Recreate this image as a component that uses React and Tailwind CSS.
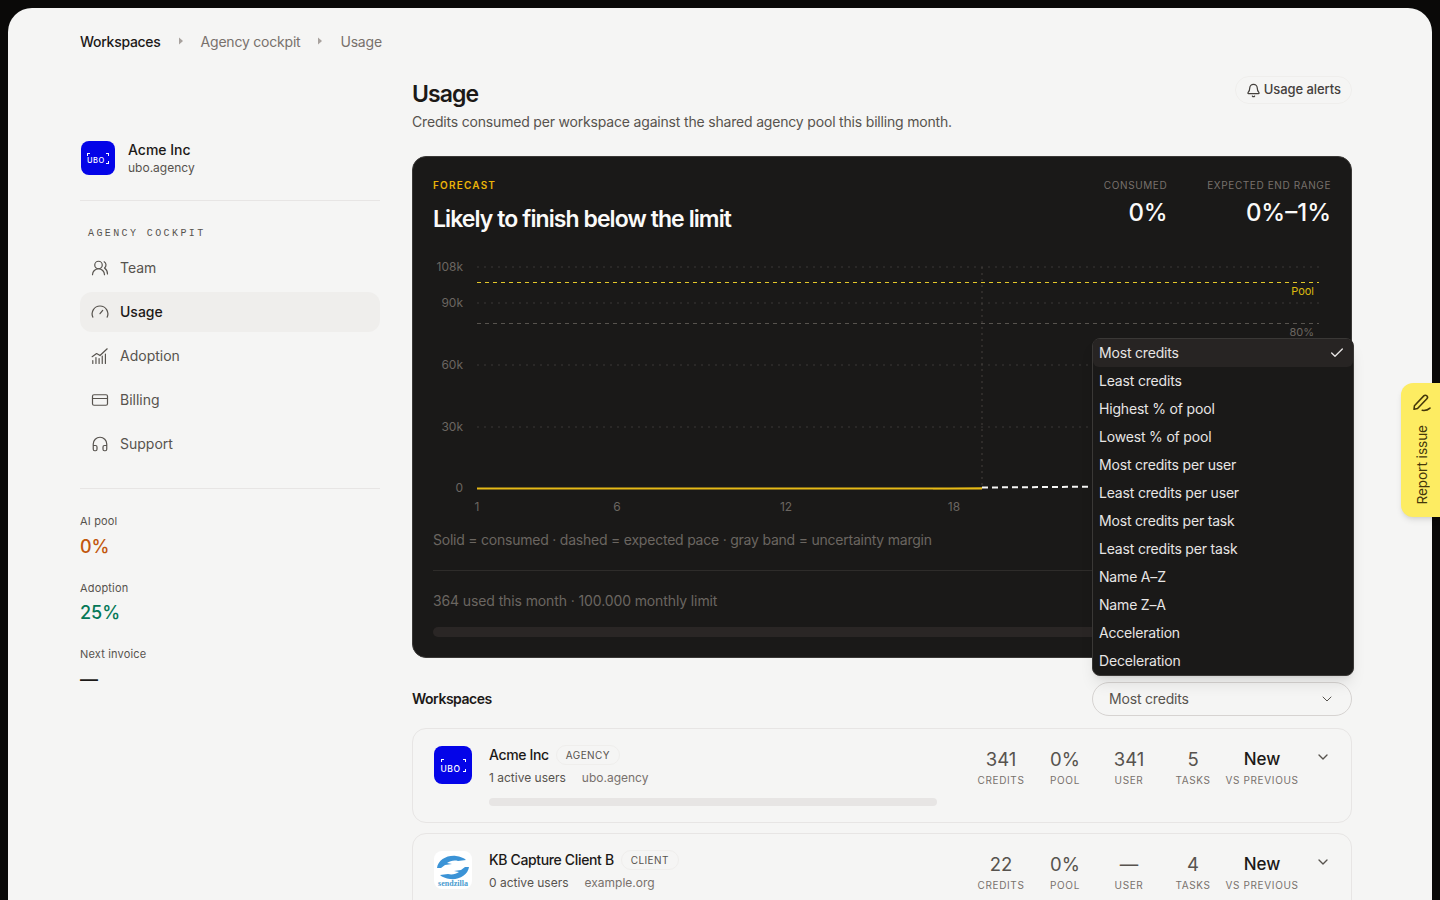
import React from "react";
import { Bell, Check, ChevronDown, CreditCard, Headphones, UsersRound } from "lucide-react";

const sortOptions = [
  "Most credits",
  "Least credits",
  "Highest % of pool",
  "Lowest % of pool",
  "Most credits per user",
  "Least credits per user",
  "Most credits per task",
  "Least credits per task",
  "Name A–Z",
  "Name Z–A",
  "Acceleration",
  "Deceleration",
];

const GaugeIcon = () => (
  <svg width="18" height="18" viewBox="0 0 16 16" fill="none" stroke="currentColor" strokeWidth="1.1" strokeLinecap="round" className="shrink-0 text-[#57534e]">
    <path d="M1.6 12.5A7 7 0 1 1 14.4 12.5" />
    <path d="M8 9.5 10.4 6.6" />
  </svg>
);

const AdoptionIcon = () => (
  <svg width="18" height="18" viewBox="0 0 16 16" fill="none" stroke="currentColor" strokeWidth="1.05" strokeLinecap="round" strokeLinejoin="round" className="shrink-0">
    <path d="M1 8.6 5 5.8 8 7.6 14.4 1.6" />
    <path d="M1.6 14.6v-2.6M4.4 14.6V9.4M7.2 14.6v-4.4M10 14.6V8M12.8 14.6V6.2" />
  </svg>
);

const UboLogo = ({ size, box, text, className = "" }) => (
  <div className={`${className} flex shrink-0 items-center justify-center rounded-[8px] bg-[#0404e8]`} style={{ width: size, height: size }}>
    <div className={`${box} relative flex items-end`}>
      <span className="absolute left-0 top-0 h-[3px] w-[3px] border-l border-t border-white" />
      <span className="absolute right-0 top-0 h-[3px] w-[3px] border-r border-t border-white" />
      <span className="absolute bottom-0 right-0 h-[3px] w-[3px] border-b border-r border-white" />
      <span className={`${text} font-medium leading-[6px] tracking-[0.06em] text-white`}>UBO</span>
    </div>
  </div>
);

const SendzillaLogo = () => (
  <div className="flex h-[38px] w-[38px] shrink-0 flex-col items-center rounded-[8px] bg-white pt-[3px]">
    <svg width="34" height="27" viewBox="0 0 34 27">
      <path d="M1 14C2 6 11 1 20 2c4 .5 8 2 10 4l-8 1c-4-1-8 0-11 2l5 1-7 1-4 3z" fill="#3b93d6" />
      <path d="M33 13C32 21 23 26 14 25c-4-.5-8-2-10-4l8-1c4 1 8 0 11-2l-5-1 7-1 4-3z" fill="#3b93d6" />
    </svg>
    <span className="mt-[-1px] font-['Liberation_Serif',serif] text-[8px] font-bold leading-[7px] text-[#4a9ccf]">sendzilla</span>
  </div>
);

const NavItem = ({ icon, label, active }) => (
  <div className={`flex h-10 items-center gap-3 rounded-[12px] px-3 text-[14px] leading-[20px] ${active ? "bg-[#efeeec] font-medium text-[#1c1917]" : "text-[#57534e]"}`}>
    <span className="flex w-4 justify-center">{icon}</span>
    {label}
  </div>
);

const SideStat = ({ label, value, color, className, gap = "mt-[5px]" }) => (
  <div className={className}>
    <div className="text-[11px] leading-[14px] tracking-[0.015em] text-[#57534e]">{label}</div>
    <div className={`${gap} text-[18px] font-medium leading-[28px] ${color}`}>{value}</div>
  </div>
);

const Crumb = () => (
  <svg width="6" height="8" viewBox="0 0 6 8" className="mx-[17px]">
    <path d="M1 0.5 5 4 1 7.5Z" fill="#a8a29e" />
  </svg>
);

const Chart = () => (
  <svg width="898" height="263" viewBox="0 0 898 263" className="block font-['Inter',sans-serif]">
    {[12, 48, 110, 172].map((y) => (
      <line key={y} x1="44" x2="886" y1={y} y2={y} stroke="#3a3836" strokeDasharray="2 5" />
    ))}
    <line x1="44" x2="886" y1="27.5" y2="27.5" stroke="#e3c72a" strokeDasharray="4 4" />
    <line x1="44" x2="886" y1="68.5" y2="68.5" stroke="#57534e" strokeDasharray="4 4" />
    <line x1="549" x2="549" y1="12" y2="233" stroke="#44403c" strokeDasharray="2 4" />
    <path d="M500 233.5 549 232 549 234 500 234.5Z" fill="#78650f" />
    <line x1="44" x2="549" y1="233.5" y2="233.5" stroke="#e6b917" strokeWidth="2" />
    <line x1="549" x2="886" y1="232.5" y2="230" stroke="#f5f5f4" strokeWidth="2" strokeDasharray="6 4" />
    <g fill="#6b6661" fontSize="12" textAnchor="end">
      <text x="30" y="16">108k</text>
      <text x="30" y="52">90k</text>
      <text x="30" y="114">60k</text>
      <text x="30" y="176">30k</text>
      <text x="30" y="237">0</text>
    </g>
    <g fill="#6b6661" fontSize="12" textAnchor="middle">
      <text x="44" y="256">1</text>
      <text x="184" y="256">6</text>
      <text x="353" y="256">12</text>
      <text x="521" y="256">18</text>
    </g>
    <text x="881" y="40" fill="#dcb90f" fontSize="11" textAnchor="end">Pool</text>
    <text x="881" y="81" fill="#6b6661" fontSize="11" textAnchor="end">80%</text>
  </svg>
);

const Metric = ({ value, label, strong, className = "w-16" }) => (
  <div className={`${className} -mt-px flex flex-col items-center`}>
    <div className={strong ? "text-[17px] font-medium leading-[28px] text-[#1c1917]" : "text-[18.5px] leading-[28px] text-[#57534e]"}>{value}</div>
    <div className="whitespace-nowrap text-[10px] leading-[14px] tracking-[0.065em] text-[#78716c]">{label}</div>
  </div>
);

const WorkspaceCard = ({ logo, name, tag, users, domain, credits, user, tasks, bar }) => (
  <div className="flex h-[95px] shrink-0 items-start rounded-[14px] border border-[#e7e5e4] pl-[21px] pr-[20px] pt-[17px]">
    {logo}
    <div className="ml-[17px] mt-[-2px] w-[448px] shrink-0">
      <div className="flex h-5 items-center">
        <span className="text-[14px] font-medium tracking-[-0.025em] text-[#1c1917]">{name}</span>
        <span className="ml-[7px] mt-[2px] rounded-full border border-[#efeeec] px-[9px] py-[2px] text-[10px] leading-[14px] tracking-[0.04em] text-[#57534e]">{tag}</span>
      </div>
      <div className="mt-[4px] flex text-[12px] leading-[20px]">
        <span className="text-[#57534e]">{users}</span>
        <span className="ml-4 text-[#78716c]">{domain}</span>
      </div>
      {bar && <div className="mt-[10px] h-2 rounded-full bg-[#e7e5e4]" />}
    </div>
    <div className="ml-[32px] flex shrink-0">
      <Metric value={credits} label="CREDITS" />
      <Metric value="0%" label="POOL" />
      <Metric value={user} label="USER" />
      <Metric value={tasks} label="TASKS" />
      <Metric value="New" label="VS PREVIOUS" strong className="w-[74px]" />
    </div>
    <ChevronDown size={16} className="ml-4 mt-[3px] shrink-0 text-[#57534e]" />
  </div>
);

export default function App() {
  return (
    <div className="relative h-[900px] overflow-hidden bg-[#0a0908] px-2 pt-2 font-['Inter',sans-serif]">
      <div className="h-[892px] overflow-hidden rounded-t-[24px] bg-[#f5f5f4] px-[72px] pt-[23px]">
        <div className="flex h-5 items-center text-[14px] tracking-[-0.015em] text-[#78716c]">
          <span className="font-medium tracking-[-0.02em] text-[#1c1917]">Workspaces</span>
          <Crumb />
          <span>Agency cockpit</span>
          <Crumb />
          <span>Usage</span>
        </div>

        <div className="flex gap-8">
          {/* sidebar */}
          <aside className="w-[300px] shrink-0 pt-[89px]">
            <div className="flex items-start gap-[13px] pb-[23px] pl-px">
              <UboLogo size={34} box="h-[11px] w-[22px]" text="text-[7.5px]" className="mt-px" />
              <div className="mt-px">
                <div className="text-[14px] font-medium leading-[18px] text-[#1c1917]">Acme Inc</div>
                <div className="text-[12px] leading-[18px] text-[#57534e]">ubo.agency</div>
              </div>
            </div>
            <div className="border-t border-[#e7e5e4] pb-[26px]" />
            <div className="pl-2 font-['Liberation_Mono',monospace] text-[10px] leading-[14px] tracking-[0.24em] text-[#57534e]">AGENCY COCKPIT</div>
            <nav className="mt-[7px] flex flex-col gap-1">
              <NavItem label="Team" icon={<UsersRound size={18} strokeWidth={1.6} className="shrink-0" />} />
              <NavItem label="Usage" active icon={<GaugeIcon />} />
              <NavItem label="Adoption" icon={<AdoptionIcon />} />
              <NavItem label="Billing" icon={<CreditCard size={18} strokeWidth={1.6} className="shrink-0" />} />
              <NavItem label="Support" icon={<Headphones size={18} strokeWidth={1.6} className="shrink-0" />} />
            </nav>
            <div className="mt-[24px] border-t border-[#e7e5e4]" />
            <SideStat className="mt-[25px]" label="AI pool" value="0%" color="text-[#c2570c]" />
            <SideStat className="mt-[20px]" label="Adoption" value="25%" color="text-[#047857]" gap="mt-[4px]" />
            <SideStat className="mt-[20px]" label="Next invoice" value="—" color="text-[#1c1917]" />
          </aside>

          {/* main column */}
          <main className="flex w-[940px] shrink-0 flex-col pt-[27px]">
            <div className="flex items-start justify-between">
              <div>
                <h1 className="text-[23px] font-semibold leading-[32px] tracking-[-0.04em] text-[#1c1917]">Usage</h1>
                <p className="mt-[2px] text-[14px] leading-[20px] tracking-[-0.013em] text-[#57534e]">Credits consumed per workspace against the shared agency pool this billing month.</p>
              </div>
              <button className="-mt-[2px] flex h-7 items-center gap-[3px] rounded-full border border-[#efeeec] pl-[10px] pr-[10px] text-[13px] font-medium tracking-[-0.005em] text-[#44403c]">
                <Bell size={15} strokeWidth={2} />
                Usage alerts
              </button>
            </div>

            <section className="mt-[24px] h-[502px] rounded-[14px] border border-[#3a3836] bg-[#1a1918] px-5 pt-5">
              <div className="flex items-start justify-between">
                <div>
                  <div className="text-[10px] font-semibold leading-[16px] tracking-[0.12em] text-[#eab308]">FORECAST</div>
                  <h2 className="mt-[10px] text-[23px] font-semibold leading-[32px] tracking-[-0.04em] text-[#fafaf9]">Likely to finish below the limit</h2>
                </div>
                <div className="flex gap-10 text-right">
                  <div>
                    <div className="text-[10px] leading-[16px] tracking-[0.06em] text-[#78716c]">CONSUMED</div>
                    <div className="mt-[4px] text-[24px] font-medium leading-[32px] tracking-[-0.01em] text-[#fafaf9]">0%</div>
                  </div>
                  <div>
                    <div className="text-[10px] leading-[16px] tracking-[0.06em] text-[#78716c]">EXPECTED END RANGE</div>
                    <div className="mt-[4px] text-[24px] font-medium leading-[32px] text-[#fafaf9]">0%–1%</div>
                  </div>
                </div>
              </div>
              <div className="mt-[20px]">
                <Chart />
              </div>
              <p className="mt-[12px] text-[14px] leading-[20px] tracking-[-0.016em] text-[#6b6661]">Solid = consumed · dashed = expected pace · gray band = uncertainty margin</p>
              <div className="mt-5 border-t border-[#2e2c2a]" />
              <p className="mt-5 text-[14px] leading-[20px] tracking-[-0.008em] text-[#6b6661]">364 used this month · 100.000 monthly limit</p>
              <div className="mt-4 h-[10px] rounded-full bg-[#2a2625]" />
            </section>

            <div className="mt-6 flex items-center justify-between">
              <h3 className="mb-[2px] text-[14px] font-semibold tracking-[-0.035em] text-[#1c1917]">Workspaces</h3>
              <div className="relative w-[260px]">
                <div className="absolute bottom-[calc(100%+6px)] left-0 z-10 w-[262px] rounded-[8px] border border-[#3a3836] bg-[#1a1918] shadow-lg">
                  {sortOptions.map((option, i) => (
                    <div key={option} className={`flex h-7 items-center justify-between rounded-[6px] px-[6px] text-[14px] leading-[20px] tracking-[-0.013em] text-[#e7e5e4] ${i === 0 ? "bg-[#272423]" : ""}`}>
                      {option}
                      {i === 0 && <Check size={16} strokeWidth={2} className="mr-[2px]" />}
                    </div>
                  ))}
                </div>
                <div className="flex h-[34px] items-center justify-between rounded-full border border-[#d6d3d1] pl-4 pr-[16px] text-[14px] leading-[20px] tracking-[-0.013em] text-[#57534e]">
                  Most credits
                  <ChevronDown size={16} strokeWidth={1.5} />
                </div>
              </div>
            </div>

            <div className="mt-3 flex flex-col gap-[10px]">
              <WorkspaceCard
                logo={<UboLogo size={38} box="h-[13px] w-[25px]" text="text-[8.5px]" />}
                name="Acme Inc"
                tag="AGENCY"
                users="1 active users"
                domain="ubo.agency"
                credits="341"
                user="341"
                tasks="5"
                bar
              />
              <WorkspaceCard
                logo={<SendzillaLogo />}
                name="KB Capture Client B"
                tag="CLIENT"
                users="0 active users"
                domain="example.org"
                credits="22"
                user="—"
                tasks="4"
              />
            </div>
          </main>
        </div>
      </div>

      {/* floating feedback tab */}
      <button className="absolute right-0 top-[383px] flex h-[134px] w-[39px] flex-col items-center gap-[12px] rounded-l-[12px] bg-[#fdec62] pl-[2px] pt-[10px] text-[#44370a] shadow-md">
        <svg width="20" height="20" viewBox="0 0 18 18" fill="none" stroke="currentColor" strokeWidth="1.4" strokeLinecap="round" strokeLinejoin="round">
          <path d="M2.2 11.5 10.6 2.6a1.9 1.9 0 0 1 2.8 2.6L5 14l-3.2.7Z" />
          <path d="M9.2 15.6c2.6.4 5-.2 7-2" />
        </svg>
        <span className="rotate-180 text-[13.5px] leading-[16px] [writing-mode:vertical-rl]">Report issue</span>
      </button>
    </div>
  );
}
